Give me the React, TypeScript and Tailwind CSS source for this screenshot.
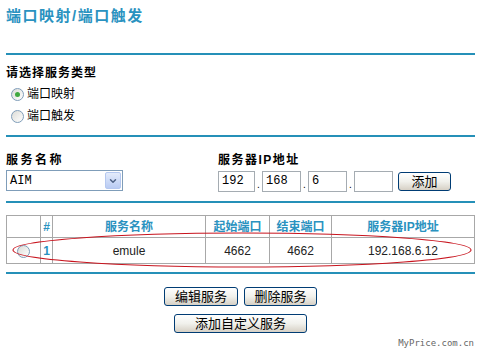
import { ChevronDown } from 'lucide-react';

const cjk = "font-['Liberation_Sans','Noto_Sans_CJK_SC',sans-serif]";
const mono = "font-['Liberation_Mono','Noto_Sans_CJK_SC',monospace]";

function Radio({ checked, label }: { checked?: boolean; label: string }) {
  return (
    <label className="flex items-center gap-[3px] h-[22px]">
      <span className="w-[13px] h-[13px] rounded-full border border-[#7f9db9] bg-gradient-to-br from-[#dcdcd7] to-white flex items-center justify-center">
        {checked && <span className="w-[5px] h-[5px] rounded-full bg-[#3fa83f]" />}
      </span>
      <span className="text-[12px] text-black">{label}</span>
    </label>
  );
}

function Btn({ children, w }: { children: React.ReactNode; w: string }) {
  return (
    <button
      className={`${w} h-[19px] rounded-[3px] border border-[#003c74] bg-gradient-to-b from-white via-[#f1f1ec] to-[#d6d0c5] text-[13px] leading-none text-black flex items-center justify-center`}
    >
      {children}
    </button>
  );
}

function IpBox({ value, w }: { value: string; w: string }) {
  return (
    <div className={`${w} h-[21px] border border-[#a5acb2] bg-white ${mono} text-[12px] leading-[19px] pl-[3px]`}>
      {value}
    </div>
  );
}

export default function App() {
  return (
    <div className={`w-[484px] h-[352px] bg-white relative overflow-hidden ${cjk}`}>
      <div className="px-[6px] pr-[9px]">
        <h1 className="pt-[6px] text-[15px] font-bold leading-[20px] tracking-[1.5px] text-[#2a92c0]">端口映射/端口触发</h1>

        <div className="mt-[27px] h-[2px] bg-[#2590b8]" />

        <div className="mt-[10px] text-[12px] font-bold leading-[16px] tracking-[1px]">请选择服务类型</div>
        <div className="mt-[2px] pl-[5px]">
          <Radio checked label="端口映射" />
          <Radio label="端口触发" />
        </div>

        <div className="mt-[8px] h-[2px] bg-[#2590b8]" />

        <div className="mt-[15px] flex">
          <div className="w-[212px]">
            <div className="text-[12px] font-bold leading-[16px] tracking-[2.5px]">服务名称</div>
            <div className="mt-[2px] w-[117px] h-[21px] border border-[#7f9db9] bg-white flex items-center justify-between pl-[3px] pr-[1px]">
              <span className={`${mono} text-[12px]`}>AIM</span>
              <span className="w-[16px] h-[17px] rounded-[2px] border border-[#b5c8f0] bg-gradient-to-b from-[#e4ecfb] to-[#b9cbf3] flex items-center justify-center">
                <ChevronDown className="w-[10px] h-[10px] text-[#4d6185]" strokeWidth={3.5} />
              </span>
            </div>
          </div>
          <div>
            <div className="text-[12px] font-bold leading-[16px] tracking-[1.5px]">服务器IP地址</div>
            <div className="mt-[3px] flex items-end">
              <IpBox value="192" w="w-[37px]" />
              <span className="w-[7px] text-[10px] leading-[14px] text-center">.</span>
              <IpBox value="168" w="w-[39px]" />
              <span className="w-[7px] text-[10px] leading-[14px] text-center">.</span>
              <IpBox value="6" w="w-[39px]" />
              <span className="w-[7px] text-[10px] leading-[14px] text-center">.</span>
              <IpBox value="" w="w-[39px]" />
              <div className="ml-[5px] mb-[1px]">
                <Btn w="w-[53px]">添加</Btn>
              </div>
            </div>
          </div>
        </div>

        <div className="mt-[9px] h-[2px] bg-[#2590b8]" />

        <div className="relative mt-[12px]">
          <table className="w-[469px] border-collapse border border-[#a8a8a8] text-[12px]">
            <thead>
              <tr className="h-[22px] text-[#2a92c0] font-bold">
                <th className="w-[34px] border border-[#a8a8a8]" />
                <th className="w-[12px] border border-[#a8a8a8] font-['Liberation_Sans',sans-serif]">#</th>
                <th className="w-[153px] border border-[#a8a8a8]">服务名称</th>
                <th className="w-[64px] border border-[#a8a8a8]">起始端口</th>
                <th className="w-[62px] border border-[#a8a8a8]">结束端口</th>
                <th className="border border-[#a8a8a8]">服务器IP地址</th>
              </tr>
            </thead>
            <tbody>
              <tr className="h-[26px] text-center">
                <td className="border border-[#a8a8a8]">
                  <span className="inline-block align-middle w-[13px] h-[13px] rounded-full border border-[#7f9db9] bg-gradient-to-br from-[#dcdcd7] to-white" />
                </td>
                <td className="border border-[#a8a8a8] text-[#2a92c0] font-bold">1</td>
                <td className="border border-[#a8a8a8] text-[#222]">emule</td>
                <td className="border border-[#a8a8a8] text-[#222]">4662</td>
                <td className="border border-[#a8a8a8] text-[#222]">4662</td>
                <td className="border border-[#a8a8a8] text-[#222]">192.168.6.12</td>
              </tr>
            </tbody>
          </table>
          <svg className="absolute left-0 top-0 pointer-events-none" width="472" height="60">
            <ellipse cx="236" cy="35" rx="229" ry="17" fill="none" stroke="#c8141e" strokeWidth="1.1" />
          </svg>
        </div>

        <div className="mt-[8px] h-[2px] bg-[#2590b8]" />

        <div className="mt-[13px] flex justify-center gap-[6px]">
          <Btn w="w-[74px]">编辑服务</Btn>
          <Btn w="w-[73px]">删除服务</Btn>
        </div>
        <div className="mt-[8px] flex justify-center">
          <Btn w="w-[133px]">添加自定义服务</Btn>
        </div>
      </div>

      <div className="absolute right-[10px] bottom-[2px] font-['DejaVu_Sans_Mono',monospace] text-[9px] text-[#666]">
        MyPrice.com.cn
      </div>
    </div>
  );
}
